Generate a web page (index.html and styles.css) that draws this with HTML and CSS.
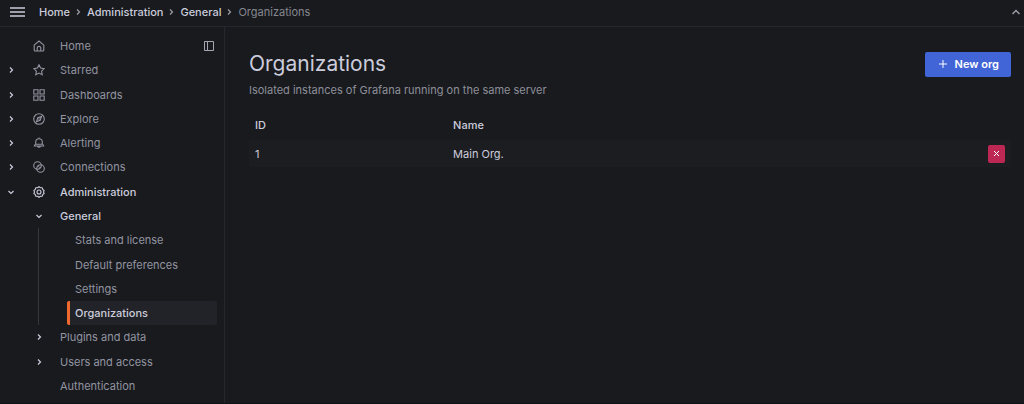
FILE: index.html
```
<!DOCTYPE html>
<html lang="en">
<head>
  <meta charset="UTF-8" />
  <meta name="viewport" content="width=device-width, initial-scale=1.0"/>
  <title>Organizations - General - Administration - Grafana</title>
  <link rel="stylesheet" href="styles.css">
</head>
<body>
  <!-- shared chevrons -->
  <svg class="sprite" aria-hidden="true">
    <symbol id="chevron-right" viewBox="0 0 12 12"><path d="M5 3.500 7.500 6 5 8.500"/></symbol>
    <symbol id="chevron-down" viewBox="0 0 12 12"><path d="M3.500 5 6 7.500 8.500 5"/></symbol>
  </svg>

  <header class="top-bar">
    <button class="icon-btn menu-btn" aria-label="Close menu">
      <svg width="16" height="12" viewBox="0 0 16 12"><path d="M1 2h15M1 6h15M1 10h15"/></svg>
    </button>
    <nav aria-label="Breadcrumbs">
      <ol class="breadcrumbs">
        <li><a href="#">Home</a></li>
        <li><svg class="chevron"><use href="#chevron-right"/></svg><a href="#">Administration</a></li>
        <li><svg class="chevron"><use href="#chevron-right"/></svg><a href="#">General</a></li>
        <li><svg class="chevron"><use href="#chevron-right"/></svg><span class="current">Organizations</span></li>
      </ol>
    </nav>
    <button class="icon-btn collapse-btn" aria-label="Toggle top bar">
      <svg width="10" height="8" viewBox="0 0 10 8"><path d="M1.500 6 5 2.500 8.500 6"/></svg>
    </button>
  </header>

  <div class="layout">
    <nav class="sidebar" aria-label="Navigation">
      <ul class="nav-list">
        <li class="nav-row">
          <span class="toggle"></span>
          <svg class="nav-icon" viewBox="0 0 12 12"><path d="M1.200 5.200 6 1l4.800 4.200v4.800a1 1 0 0 1-1 1H2.200a1 1 0 0 1-1-1zM4.200 11V8.200a1.800 1.800 0 0 1 3.600 0V11"/></svg>
          <a href="#">Home</a>
          <button class="icon-btn dock-btn" aria-label="Undock menu">
            <svg width="12" height="12" viewBox="0 0 12 12"><path d="M1.500 1.500h9v9h-9zM4.500 1.500v9"/></svg>
          </button>
        </li>
        <li class="nav-row">
          <button class="icon-btn toggle" aria-label="Expand Starred"><svg class="chevron"><use href="#chevron-right"/></svg></button>
          <svg class="nav-icon" viewBox="0 0 12 12"><path d="m6 .8 1.600 3.300 3.600.5-2.600 2.500.6 3.600L6 9l-3.200 1.700.6-3.600L.8 4.600l3.600-.5z"/></svg>
          <a href="#">Starred</a>
        </li>
        <li class="nav-row">
          <button class="icon-btn toggle" aria-label="Expand Dashboards"><svg class="chevron"><use href="#chevron-right"/></svg></button>
          <svg class="nav-icon" viewBox="0 0 12 12"><path d="M.8.8H5V5H.8zM7 .8h4.200V5H7zM.8 7H5v4.200H.8zM7 7h4.200v4.200H7z"/></svg>
          <a href="#">Dashboards</a>
        </li>
        <li class="nav-row">
          <button class="icon-btn toggle" aria-label="Expand Explore"><svg class="chevron"><use href="#chevron-right"/></svg></button>
          <svg class="nav-icon" viewBox="0 0 12 12"><circle cx="6" cy="6" r="5.300"/><path d="M8.500 3.500 7.200 7.200 3.500 8.500l1.300-3.700zM5.500 6.500l1-1"/></svg>
          <a href="#">Explore</a>
        </li>
        <li class="nav-row">
          <button class="icon-btn toggle" aria-label="Expand Alerting"><svg class="chevron"><use href="#chevron-right"/></svg></button>
          <svg class="nav-icon" viewBox="0 0 12 12"><path d="M6 .5v1M2.700 7.200V5a3.300 3.300 0 0 1 6.600 0v2.200c.9.300 1.400.8 1.400 1.800H1.300c0-1 .5-1.500 1.400-1.800zh6.600M4.500 9.200a1.600 1.600 0 0 0 3 0"/></svg>
          <a href="#">Alerting</a>
        </li>
        <li class="nav-row">
          <button class="icon-btn toggle" aria-label="Expand Connections"><svg class="chevron"><use href="#chevron-right"/></svg></button>
          <svg class="nav-icon" viewBox="0 0 12 12"><circle cx="4.500" cy="4.500" r="3.800"/><circle cx="7.500" cy="7.500" r="3.800"/><path d="m4.300 6.200 1.900-1.900M5.800 7.700l1.900-1.900"/></svg>
          <a href="#">Connections</a>
        </li>
        <li class="nav-group">
          <div class="nav-row open">
            <button class="icon-btn toggle" aria-label="Collapse Administration"><svg class="chevron"><use href="#chevron-down"/></svg></button>
            <svg class="nav-icon" viewBox="0 0 12 12"><path d="m6 .7 1.400 1.100 1.800-.1.500 1.700 1.400 1.100L10.500 6l.6 1.500-1.400 1.100-.5 1.700-1.800-.1L6 11.300l-1.400-1.100-1.800.1-.5-1.700L.9 7.500 1.500 6 .9 4.500l1.400-1.100.5-1.700 1.800.1z"/><circle cx="6" cy="6" r="2"/></svg>
            <a href="#">Administration</a>
          </div>
          <ul class="nav-group">
            <li class="nav-group">
              <div class="nav-row level-2 open">
                <button class="icon-btn toggle" aria-label="Collapse General"><svg class="chevron"><use href="#chevron-down"/></svg></button>
                <a href="#">General</a>
              </div>
              <ul class="nav-group">
                <li class="nav-row level-3"><a href="#">Stats and license</a></li>
                <li class="nav-row level-3"><a href="#">Default preferences</a></li>
                <li class="nav-row level-3"><a href="#">Settings</a></li>
                <li class="nav-row level-3"><a href="#" class="active" aria-current="page">Organizations</a></li>
              </ul>
            </li>
            <li class="nav-row level-2">
              <button class="icon-btn toggle" aria-label="Expand Plugins and data"><svg class="chevron"><use href="#chevron-right"/></svg></button>
              <a href="#">Plugins and data</a>
            </li>
            <li class="nav-row level-2">
              <button class="icon-btn toggle" aria-label="Expand Users and access"><svg class="chevron"><use href="#chevron-right"/></svg></button>
              <a href="#">Users and access</a>
            </li>
            <li class="nav-row level-2">
              <span class="toggle"></span>
              <a href="#">Authentication</a>
            </li>
          </ul>
        </li>
      </ul>
    </nav>

    <main class="content">
      <div class="page-header">
        <h1>Organizations</h1>
        <button class="new-btn">
          <svg width="10" height="10" viewBox="0 0 10 10"><path d="M5 1v8M1 5h8"/></svg>
          New org
        </button>
      </div>
      <p class="subtitle">Isolated instances of Grafana running on the same server</p>
      <table class="org-table">
        <thead>
          <tr>
            <th class="col-id">ID</th>
            <th>Name</th>
            <td class="col-action"></td>
          </tr>
        </thead>
        <tbody>
          <tr>
            <td><a href="#">1</a></td>
            <td><a href="#">Main Org.</a></td>
            <td class="col-action">
              <button class="delete-btn" aria-label="Delete org">
                <svg width="7" height="7" viewBox="0 0 7 7"><path d="m1 1 5 5M6 1 1 6"/></svg>
              </button>
            </td>
          </tr>
        </tbody>
      </table>
    </main>
  </div>
</body>
</html>
```
FILE: styles.css
```
* {
  box-sizing: border-box;
}

body {
  margin: 0;
  min-height: 100vh;
  display: flex;
  flex-direction: column;
  background-color: #181a1e;
  border-bottom: 1px solid #111217;
  color: #ccccdc;
  font-family: Inter, sans-serif;
  font-size: 11px;
  line-height: 16px;
}

a {
  color: inherit;
  text-decoration: none;
}

a:hover {
  text-decoration: underline;
}

ul,
ol {
  list-style: none;
  margin: 0;
  padding: 0;
}

button {
  font-family: inherit;
  font-size: inherit;
  border: none;
  padding: 0;
  cursor: pointer;
}

svg {
  display: block;
  flex: none;
  fill: none;
  stroke: currentColor;
}

.sprite {
  position: absolute;
  width: 0;
  height: 0;
}

.chevron {
  width: 12px;
  height: 12px;
  stroke-width: 1.2;
}

.icon-btn {
  display: flex;
  align-items: center;
  justify-content: center;
  background: none;
  color: inherit;
}

/* top bar */
.top-bar {
  display: flex;
  align-items: center;
  height: 27px;
  padding: 0 3px 2px 9px;
  border-bottom: 1px solid #26272c;
}

.menu-btn {
  margin-right: 14px;
}

.menu-btn svg {
  stroke-width: 1.5;
}

.collapse-btn {
  margin-left: auto;
  color: #9d9ea8;
}

.collapse-btn svg {
  stroke-width: 1.4;
}

.breadcrumbs,
.breadcrumbs li {
  display: flex;
  align-items: center;
}

.breadcrumbs {
  font-weight: 500;
}

.breadcrumbs .chevron {
  margin: 0 3px 0 2px;
  color: #9d9ea8;
}

.breadcrumbs .current {
  color: #86878f;
  font-weight: 400;
}

/* sidebar */
.layout {
  flex: 1;
  display: flex;
}

.sidebar {
  width: 225px;
  flex: none;
  display: flex;
  padding: 7px 7px 5px 5px;
  border-right: 1px solid #26272c;
}

.nav-list {
  flex: 1;
  display: grid;
  grid-auto-rows: minmax(24px, 1fr);
}

.nav-group {
  display: contents;
}

.nav-row {
  display: flex;
  align-items: center;
  color: #9394a0;
}

.nav-row.open {
  color: #ccccdc;
  font-weight: 500;
}

.toggle {
  width: 12px;
  height: 12px;
  color: #ccccdc;
}

.nav-icon {
  width: 12px;
  height: 12px;
  margin: 0 15px 0 16px;
  stroke-width: 1.1;
}

.dock-btn {
  margin-left: auto;
  margin-right: 2px;
  color: #a5a6b1;
}

.level-2 {
  padding-left: 28px;
}

.level-2 .toggle {
  margin-right: 15px;
}

.level-3 {
  margin-left: 33px;
  padding-left: 28px;
  border-left: 1px solid #36373d;
}

.level-3 a {
  flex: 1;
  align-self: stretch;
  display: flex;
  align-items: center;
  padding-left: 8px;
  border-radius: 2px;
}

.level-3 .active {
  padding-left: 5px;
  border-left: 3px solid #f0692f;
  background-color: #222328;
  color: #ccccdc;
  font-weight: 500;
}

/* page */
.content {
  flex: 1;
  padding: 24px 13px 24px 24px;
}

.page-header {
  display: flex;
  align-items: center;
  justify-content: space-between;
}

h1 {
  margin: 0;
  font-size: 21px;
  font-weight: 400;
  line-height: 26px;
}

.new-btn {
  display: flex;
  align-items: center;
  gap: 7px;
  height: 25px;
  padding: 0 12px 0 13px;
  border-radius: 2px;
  background-color: #4164d6;
  color: #fff;
  font-weight: 600;
}

.new-btn:hover {
  background-color: #3555bd;
}

.subtitle {
  margin: 5px 0 12px;
  color: #8e8f99;
}

.org-table {
  width: 100%;
  border-collapse: collapse;
}

.org-table th,
.org-table td {
  height: 27px;
  padding: 0 6px;
  text-align: left;
}

.org-table thead th {
  height: 30px;
  font-weight: 500;
}

.org-table tbody tr {
  background-color: #1c1d21;
}

.org-table .col-id {
  width: 26%;
}

.org-table .col-action {
  width: 30px;
}

.delete-btn {
  display: flex;
  align-items: center;
  justify-content: center;
  width: 17px;
  height: 18px;
  margin-left: auto;
  border-radius: 2px;
  background-color: #bd2754;
  color: #fff;
}
```
